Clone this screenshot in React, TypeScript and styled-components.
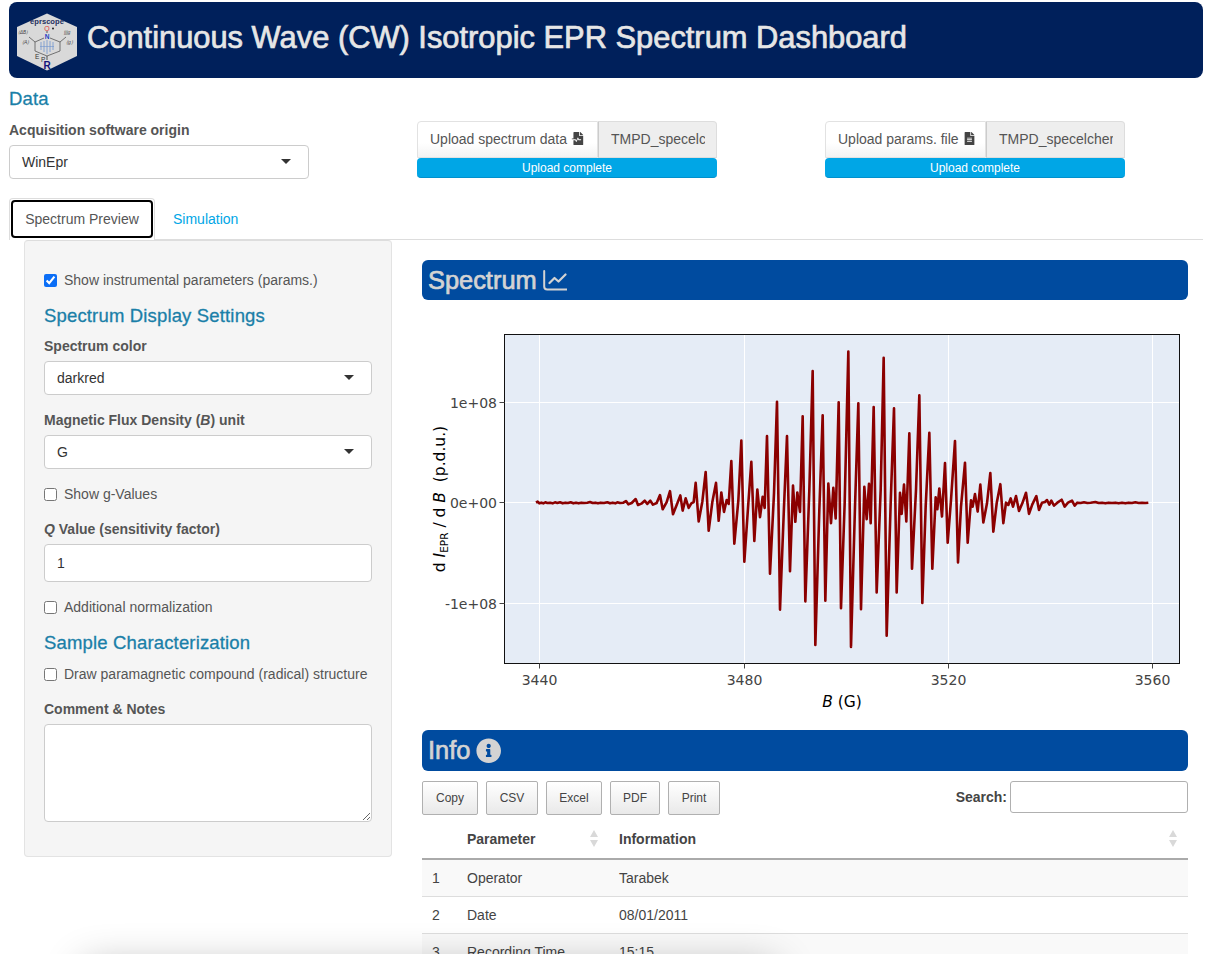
import React from "react";
import styled, { createGlobalStyle } from "styled-components";
import { FaFileAlt, FaFileMedicalAlt, FaInfoCircle } from "react-icons/fa";

const Global = createGlobalStyle`
  html, body { margin: 0; padding: 0; background: #fff; }
  body { font-family: "Liberation Sans", Arial, sans-serif; font-size: 14px; color: #333; }
`;

const App0 = styled.div`
  position: relative;
  width: 1209px;
  height: 954px;
  overflow: hidden;
  padding: 2px 6px 0 9px;
  box-sizing: border-box;
`;

const Header = styled.header`
  height: 76px;
  background: #00205b;
  border-radius: 8px;
  display: flex;
  align-items: center;
  padding-left: 7px;
  gap: 9px;
`;

const LogoSvg = styled.svg`
  flex: none;
  margin-top: 4px;
`;

const Title = styled.h1`
  margin: 0 0 4px;
  font-size: 30.85px;
  font-weight: 400;
  color: #e6e6e6;
  white-space: nowrap;
  -webkit-text-stroke: 0.7px #e6e6e6;
`;

const SectionHeading = styled.h4<{ $top?: number }>`
  margin: ${(p) => p.$top ?? 0}px 0 0;
  font-size: 18.5px;
  letter-spacing: 0.16px;
  line-height: 20px;
  font-weight: 400;
  color: #1a7fa8;
  -webkit-text-stroke: 0.3px #1a7fa8;
`;

const DataRow = styled.div`
  display: grid;
  grid-template-columns: 408px 408px 300px;
  height: 89px;
`;

const Field = styled.div`
  width: 300px;
`;

const Label = styled.div<{ $top?: number }>`
  margin-top: ${(p) => p.$top ?? 0}px;
  font-size: 14px;
  line-height: 20px;
  font-weight: 700;
  color: #555;
`;

const Select = styled.div<{ $top?: number; $full?: boolean }>`
  margin-top: ${(p) => p.$top ?? 5}px;
  height: 34px;
  box-sizing: border-box;
  width: ${(p) => (p.$full ? "100%" : "300px")};
  background: #fff;
  border: 1px solid #ccc;
  border-radius: 4px;
  display: flex;
  align-items: center;
  justify-content: space-between;
  padding: 0 17px 0 12px;
  color: #333;
`;

const Caret = styled.span`
  width: 0;
  height: 0;
  border-left: 5px solid transparent;
  border-right: 5px solid transparent;
  border-top: 5px solid #333;
  margin-top: -2px;
`;

const Upload = styled.div`
  margin-top: 12px;
  width: 300px;
`;

const UploadRow = styled.div`
  display: flex;
  height: 37px;
  box-sizing: border-box;
`;

const UploadButton = styled.div<{ $w: number }>`
  flex: 0 0 ${(p) => p.$w}px;
  box-sizing: border-box;
  display: flex;
  align-items: center;
  gap: 4px;
  padding: 0 0 2px 12px;
  color: #555;
  white-space: nowrap;
  background: linear-gradient(#fff 60%, #f3f3f3);
  border: 1px solid #e2e2e2;
  border-radius: 4px 0 0 0;
  svg { font-size: 13px; color: #444; }
`;

const UploadName = styled.div`
  flex: 1;
  box-sizing: border-box;
  min-width: 0;
  display: flex;
  align-items: center;
  background: #eee;
  border: 1px solid #ddd;
  border-left-color: #ccc;
  border-radius: 0 4px 0 0;
  padding: 0 11px 2px 12px;
  color: #555;
  white-space: nowrap;
`;

const Clip = styled.span`
  display: block;
  overflow: hidden;
`;

const Progress = styled.div`
  height: 20px;
  box-sizing: border-box;
  background: #00a6e6;
  border-bottom: 1px solid #0090cc;
  border-radius: 4px;
  color: #fff;
  font-size: 12px;
  line-height: 20px;
  text-align: center;
`;

const Tabs = styled.nav`
  height: 42px;
  box-sizing: border-box;
  border-bottom: 1px solid #ddd;
  display: flex;
`;

const ActiveTab = styled.div`
  width: 146px;
  height: 42px;
  box-sizing: border-box;
  background: #fff;
  border: 1px solid #ddd;
  border-bottom: none;
  border-radius: 4px 4px 0 0;
  padding: 1px;
`;

const TabFocus = styled.div`
  height: 38px;
  box-sizing: border-box;
  border: 2px solid #000;
  border-radius: 4px;
  display: flex;
  align-items: center;
  justify-content: center;
  color: #555;
`;

const TabLink = styled.div`
  padding: 0 15px;
  margin-left: 3px;
  line-height: 42px;
  color: #00a6e6;
`;

const Main = styled.div`
  display: flex;
  padding-left: 15px;
  gap: 30px;
`;

const Panel = styled.aside`
  flex: 0 0 368px;
  height: 617px;
  box-sizing: border-box;
  background: #f5f5f5;
  border: 1px solid #e3e3e3;
  border-top-color: #ddd;
  border-radius: 4px;
  padding: 29px 19px 0;
`;

const CheckRow = styled.label<{ $top?: number }>`
  display: flex;
  align-items: center;
  gap: 7px;
  margin-top: ${(p) => p.$top ?? 0}px;
  height: 20px;
  color: #555;
  white-space: nowrap;
`;

const Check = styled.input`
  margin: 0;
  width: 13px;
  height: 13px;
  accent-color: #0b6ef6;
`;

const TextField = styled.div`
  margin-top: 5px;
  height: 38px;
  box-sizing: border-box;
  background: #fff;
  border: 1px solid #ccc;
  border-radius: 4px;
  display: flex;
  align-items: center;
  padding-left: 12px;
  color: #333;
`;

const Notes = styled.textarea`
  display: block;
  margin-top: 5px;
  width: 100%;
  height: 98px;
  box-sizing: border-box;
  background: #fff;
  border: 1px solid #ccc;
  border-radius: 4px;
`;

const Content = styled.section`
  flex: 0 0 766px;
  padding-top: 20px;
`;

const BlueBar = styled.div<{ $h: number; $top?: number }>`
  margin-top: ${(p) => p.$top ?? 0}px;
  height: ${(p) => p.$h}px;
  background: #004b9f;
  border-radius: 6px;
  display: flex;
  align-items: center;
  gap: 6px;
  padding-left: 6px;
  color: #d3d3d3;
  font-size: 25.4px;
  -webkit-text-stroke: 0.7px #d3d3d3;
`;

const PlotSvg = styled.svg`
  display: block;
  margin-top: 20px;
`;

const Toolbar = styled.div`
  margin-top: 10px;
  display: flex;
  height: 38px;
`;

const DtButton = styled.div<{ $w: number }>`
  width: ${(p) => p.$w}px;
  height: 34px;
  box-sizing: border-box;
  margin-right: 8px;
  display: flex;
  align-items: center;
  justify-content: center;
  font-size: 12px;
  color: #444;
  background: linear-gradient(#fff, #e9e9e9);
  border: 1px solid #b0b0b0;
  border-radius: 2px;
`;

const Search = styled.div`
  margin-left: auto;
  display: flex;
  gap: 3px;
  font-weight: 700;
  line-height: 32px;
  color: #444;
`;

const SearchInput = styled.div`
  width: 178px;
  height: 32px;
  box-sizing: border-box;
  background: #fff;
  border: 1px solid #b0b0b0;
  border-radius: 3px;
`;

const Table = styled.table`
  width: 100%;
  border-collapse: collapse;
  table-layout: fixed;
`;

const Th = styled.th<{ $w?: number }>`
  width: ${(p) => (p.$w ? `${p.$w}px` : "auto")};
  height: 40px;
  box-sizing: border-box;
  padding: 0 10px;
  text-align: left;
  font-weight: 700;
  color: #444;
  border-bottom: 2px solid #aaa;
`;

const ThInner = styled.div`
  display: flex;
  justify-content: space-between;
  align-items: center;
`;

const Td = styled.td`
  height: 37px;
  box-sizing: border-box;
  padding: 0 10px;
  color: #444;
  border-bottom: 1px solid #ddd;
`;

const Tr = styled.tr<{ $odd?: boolean }>`
  background: ${(p) => (p.$odd ? "#f9f9f9" : "#fff")};
`;

const BottomShadow = styled.div`
  position: absolute;
  left: 90px;
  top: 972px;
  width: 680px;
  height: 40px;
  background: #888;
  box-shadow: 0 0 40px 6px rgba(0, 0, 0, 0.3);
  pointer-events: none;
`;

const SortIcon = () => (
  <svg width="10" height="17" viewBox="0 0 10 17">
    <path d="M5 0 L9 7 H1 Z M1 10 H9 L5 17 Z" fill="#d9d9d9" />
  </svg>
);

const ChartIcon = () => (
  <svg width="24" height="21" viewBox="0 0 24 21" fill="none" stroke="#d3d3d3">
    <path d="M1.2 1 V16.5 a3 3 0 0 0 3 3 H23.5" strokeWidth="2" strokeLinecap="round" />
    <path d="M6.5 13 L11.5 8 L15.5 11.5 L22.5 4.5" strokeWidth="2.2" strokeLinecap="round" strokeLinejoin="round" />
  </svg>
);

const Logo = () => (
  <LogoSvg width="62" height="58" viewBox="0 0 62 58">
    <path d="M31 0.5 L61 14 V43 L31 57.5 L1 43 V14 Z" fill="#d9d9d9" />
    <text x="31" y="10.5" textAnchor="middle" fontSize="7.6" fontWeight="700" fontFamily="Liberation Sans" fill="#24305e">eprscope</text>
    <text x="31" y="17.5" textAnchor="middle" fontSize="7" fontFamily="Liberation Sans" fill="#e03a3a">O</text>
    <circle cx="37" cy="15.5" r="1" fill="#222" />
    <path d="M31 18 V20" stroke="#333" strokeWidth="0.8" />
    <text x="31" y="26" textAnchor="middle" fontSize="6.5" fontWeight="700" fontFamily="Liberation Sans" fill="#1c3fc4">N</text>
    <path d="M28 25 L19 29 V38 L31 43 L44 38 V29 L34 25" fill="none" stroke="#555" strokeWidth="0.8" />
    <path d="M19 29 L13 24 M44 29 L50 24" stroke="#555" strokeWidth="0.8" />
    <path d="M25 29 V37 M28 28 V39 M31 27 V41 M34 28 V39 M37 29 V37" stroke="#6f94cf" strokeWidth="0.8" />
    <path d="M24 33.5 H38" stroke="#6f94cf" strokeWidth="0.6" />
    <text x="2" y="21" fontSize="4.6" fontStyle="italic" fontFamily="Liberation Sans" fill="#444">{"⟨ΔB⟩"}</text>
    <text x="6" y="31" fontSize="5" fontStyle="italic" fontFamily="Liberation Sans" fill="#444">{"⟨A⟩"}</text>
    <text x="48" y="21" fontSize="4.6" fontStyle="italic" fontFamily="Liberation Sans" fill="#444">{"∫∫∫g"}</text>
    <text x="50" y="31" fontSize="5" fontStyle="italic" fontFamily="Liberation Sans" fill="#444">{"⟨g⟩"}</text>
    <text x="19" y="46" fontSize="6.5" fontFamily="Liberation Sans" fill="#333">E</text>
    <text x="25" y="49" fontSize="6.5" fontFamily="Liberation Sans" fill="#333">P</text>
    <path d="M31 43 V47" stroke="#333" strokeWidth="0.8" />
    <text x="31" y="55.5" textAnchor="middle" fontSize="10" fontWeight="700" fontFamily="Liberation Sans" fill="#14147a">R</text>
  </LogoSvg>
);

const LEFT: number[][] = [
  [108,518],[113,515],[118,520],[124,518],[130,520],[136,517],[142,519],[150,518],[158,520],[165,517],[172,519],[180,517],[188,520],[196,518],[204,519],[212,517],[220,520],[228,518],[236,520],[244,518],[252,519],[262,518],[270,516],[278,519],[286,518],[294,520],[302,518],[312,519],[322,517],[330,520],[338,518],[346,520],[352,517],[360,519],[370,518],
  [378,513],[385,523],[395,519],[407,507],[414,525],[424,521],[434,512],[442,522],[451,512],[459,524],[470,519],[480,495],[488,538],[500,516],[510,483],[519,553],[530,525],[541,496],[548,542],[557,505],[566,534],[574,520],[581,516],[587,458],[596,575],[607,515],[617,425],[626,603],[637,516],[648,458],[656,573],[664,487],[672,546],[680,510],[686,522],[694,392],[703,642],[715,512],[724,330],[733,697],[745,520],[754,394],[763,634],[772,478],[780,562],[788,500],[794,534],[801,316],[810,733],[822,490],[831,212],[840,842],[852,530],[861,316],[870,726],[879,466],[886,576],[892,487],[900,546],[908,256],[916,817],[928,480],[938,119],[946,949],[958,540],[968,253],[976,815],[985,460],[993,580],[1000,473],[1007,566],[1016,214],
];
const RIGHT: number[][] = [
  [3,838],[14,520],[25,60],[33,955],[45,530],[55,217],[63,841],[73,470],[80,568],[87,461],[92,580],[101,228],[110,790],[122,480],[131,79],[140,921],[152,520],[162,232],[170,790],[180,488],[185,552],[192,463],[199,575],[208,308],[216,718],[228,480],[238,193],[247,822],[257,530],[268,306],[277,718],[287,502],[292,538],[298,475],[306,560],[315,398],[323,639],[333,510],[345,331],[354,699],[363,530],[375,397],[383,639],[393,511],[398,530],[405,492],[413,545],[421,463],[430,578],[441,520],[451,428],[460,606],[470,520],[481,462],[490,580],[498,518],[505,525],[512,505],[519,530],[528,498],[537,543],[547,520],[558,488],[567,552],[577,523],[589,498],[597,540],[606,518],[615,516],[621,510],[628,524],[634,512],[642,527],[652,518],[665,509],[674,530],[684,518],[696,512],[704,527],[712,518],
  [722,519],[732,517],[742,519],[752,518],[766,516],[776,519],[786,518],[796,520],[806,518],[816,519],[826,518],[836,520],[846,518],[856,520],[866,518],[876,519],[886,517],[896,519],[906,518],[916,519],[925,518],
];

const toPt = (ox: number) => ([x, y]: number[]) => {
  const yy = 518 + (y - 518) * 0.99;
  return `${(x / 3 + ox - 422).toFixed(2)},${(yy / 3 + 330 - 320).toFixed(2)}`;
};
const SPECTRUM = [...LEFT.map(toPt(500)), ...RIGHT.map(toPt(840))].join(" ");

const PX = { l: 82.5, r: 757.5, t: 14.5, b: 343.5 };
const XT = [{ x: 117.5, t: "3440" }, { x: 322.5, t: "3480" }, { x: 526.5, t: "3520" }, { x: 730.5, t: "3560" }];
const YT = [{ y: 82.5, t: "1e+08" }, { y: 182.5, t: "0e+00" }, { y: 283.5, t: "-1e+08" }];
const plotFont = '"DejaVu Sans", Verdana, sans-serif';

const Plot = () => (
  <PlotSvg width="766" height="400" viewBox="0 0 766 400">
    <rect x={PX.l} y={PX.t} width={PX.r - PX.l} height={PX.b - PX.t} fill="#e5ecf6" />
    {XT.map((t) => (
      <line key={t.t} x1={t.x} x2={t.x} y1={PX.t} y2={PX.b} stroke="#fff" strokeWidth="1" />
    ))}
    {YT.map((t) => (
      <line key={t.t} x1={PX.l} x2={PX.r} y1={t.y} y2={t.y} stroke="#fff" strokeWidth="1" />
    ))}
    <polyline points={SPECTRUM} fill="none" stroke="#8b0000" strokeWidth="2.6" strokeLinejoin="round" />
    <rect x={PX.l} y={PX.t} width={PX.r - PX.l} height={PX.b - PX.t} fill="none" stroke="#111" strokeWidth="1" />
    {XT.map((t) => (
      <g key={t.t}>
        <line x1={t.x} x2={t.x} y1={PX.b} y2={PX.b + 5} stroke="#444" />
        <text x={t.x} y={PX.b + 21} textAnchor="middle" fontFamily={plotFont} fontSize="14" fill="#444">{t.t}</text>
      </g>
    ))}
    {YT.map((t) => (
      <g key={t.t}>
        <line x1={PX.l - 5} x2={PX.l} y1={t.y} y2={t.y} stroke="#444" />
        <text x={PX.l - 7.5} y={t.y + 5} textAnchor="end" fontFamily={plotFont} fontSize="14" fill="#444">{t.t}</text>
      </g>
    ))}
    <text x="420" y="387" textAnchor="middle" fontFamily={plotFont} fontSize="15.5" fill="#000">
      <tspan fontStyle="italic">B</tspan> (G)
    </text>
    <text transform="translate(23,179) rotate(-90)" textAnchor="middle" fontFamily={plotFont} fontSize="15.5" fill="#000" xmlSpace="preserve">
      {"d "}<tspan fontStyle="italic">I</tspan><tspan fontSize="10.5" dy="3">EPR</tspan><tspan dy="-3">{" / d "}</tspan><tspan fontStyle="italic">B</tspan>{"  (p.d.u.)"}
    </text>
  </PlotSvg>
);

export default function App() {
  return (
    <App0>
      <Global />
      <Header>
        <Logo />
        <Title>Continuous Wave (CW) Isotropic EPR Spectrum Dashboard</Title>
      </Header>

      <SectionHeading $top={11}>Data</SectionHeading>
      <DataRow>
        <Field>
          <Label $top={11}>Acquisition software origin</Label>
          <Select><span>WinEpr</span><Caret /></Select>
        </Field>
        <Upload>
          <UploadRow>
            <UploadButton $w={181}>Upload spectrum data <FaFileMedicalAlt /></UploadButton>
            <UploadName><Clip>TMPD_specelc</Clip></UploadName>
          </UploadRow>
          <Progress>Upload complete</Progress>
        </Upload>
        <Upload>
          <UploadRow>
            <UploadButton $w={161}>Upload params. file <FaFileAlt /></UploadButton>
            <UploadName><Clip>TMPD_specelcher</Clip></UploadName>
          </UploadRow>
          <Progress>Upload complete</Progress>
        </Upload>
      </DataRow>

      <Tabs>
        <ActiveTab><TabFocus>Spectrum Preview</TabFocus></ActiveTab>
        <TabLink>Simulation</TabLink>
      </Tabs>

      <Main>
        <Panel>
          <CheckRow><Check type="checkbox" defaultChecked />Show instrumental parameters (params.)</CheckRow>
          <SectionHeading $top={16}>Spectrum Display Settings</SectionHeading>
          <Label $top={10}>Spectrum color</Label>
          <Select $full><span>darkred</span><Caret /></Select>
          <Label $top={15}>Magnetic Flux Density (<i>B</i>) unit</Label>
          <Select $full><span>G</span><Caret /></Select>
          <CheckRow $top={15}><Check type="checkbox" />Show g-Values</CheckRow>
          <Label $top={15}><i>Q</i> Value (sensitivity factor)</Label>
          <TextField>1</TextField>
          <CheckRow $top={15}><Check type="checkbox" />Additional normalization</CheckRow>
          <SectionHeading $top={16}>Sample Characterization</SectionHeading>
          <CheckRow $top={11}><Check type="checkbox" />Draw paramagnetic compound (radical) structure</CheckRow>
          <Label $top={15}>Comment &amp; Notes</Label>
          <Notes />
        </Panel>

        <Content>
          <BlueBar $h={40}>Spectrum <ChartIcon /></BlueBar>
          <Plot />
          <BlueBar $h={41} $top={10}>Info <FaInfoCircle /></BlueBar>
          <Toolbar>
            <DtButton $w={56}>Copy</DtButton>
            <DtButton $w={52}>CSV</DtButton>
            <DtButton $w={56}>Excel</DtButton>
            <DtButton $w={50}>PDF</DtButton>
            <DtButton $w={52}>Print</DtButton>
            <Search>Search:<SearchInput /></Search>
          </Toolbar>
          <Table>
            <thead>
              <tr>
                <Th $w={35} />
                <Th $w={152}><ThInner>Parameter<SortIcon /></ThInner></Th>
                <Th><ThInner>Information<SortIcon /></ThInner></Th>
              </tr>
            </thead>
            <tbody>
              <Tr $odd><Td>1</Td><Td>Operator</Td><Td>Tarabek</Td></Tr>
              <Tr><Td>2</Td><Td>Date</Td><Td>08/01/2011</Td></Tr>
              <Tr $odd><Td>3</Td><Td>Recording Time</Td><Td>15:15</Td></Tr>
            </tbody>
          </Table>
        </Content>
      </Main>
      <BottomShadow />
    </App0>
  );
}
